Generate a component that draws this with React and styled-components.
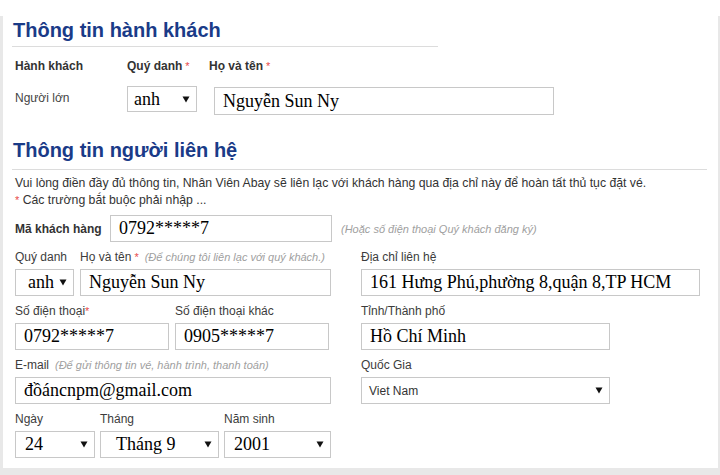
import React from 'react';
import styled, { createGlobalStyle } from 'styled-components';

const GlobalStyle = createGlobalStyle`
  html, body {
    margin: 0;
    padding: 0;
    background: #fff;
  }
  body {
    font-family: "Liberation Sans", Arial, sans-serif;
  }
  * {
    box-sizing: border-box;
  }
`;

const Page = styled.div`
  width: 720px;
  height: 475px;
  display: flex;
  flex-direction: column;
  padding: 0 2px 7px 3px;
  background: linear-gradient(#fff 0 16px, #e8e8e8 16px);
`;

const Panel = styled.div`
  flex: 1;
  background: #fff;
  padding: 18px 12px 0 10px;
`;

const SectionTitle = styled.h2`
  margin: ${p => p.$top}px 0 0 -1px;
  padding: 0 0 ${p => p.$pad}px 1px;
  width: ${p => p.$w}px;
  font: bold 20px/24px "Liberation Sans", Arial, sans-serif;
  color: #1a3b88;
  border-bottom: 1px solid #dcdcdc;
`;

const PassengerGrid = styled.div`
  display: grid;
  grid-template-columns: 112px 82px 1fr;
  row-gap: 12px;
  margin-top: 11px;
  padding-left: 2px;
  align-items: start;
`;

const HeadCell = styled.div`
  font-size: 12px;
  line-height: 16px;
  font-weight: bold;
  color: #333;
`;

const Cell = styled.div`
  font-size: 12px;
  line-height: 16px;
  color: #444;
  margin-top: ${p => p.$top || 0}px;
  margin-left: ${p => p.$left || 0}px;
`;

const Req = styled.span`
  color: #e84a4a;
  font-size: 11px;
  font-weight: normal;
  margin-left: ${p => (p.$tight ? 0 : 3)}px;
`;

const Hint = styled.span`
  font-size: 11px;
  font-style: italic;
  font-weight: normal;
  color: #a0a0a0;
  margin-left: ${p => p.$left || 6}px;
`;

const Intro = styled.p`
  margin: 5px 0 0;
  padding-left: 2px;
  font-size: 12.25px;
  line-height: 17px;
  color: #333;
`;

const CodeRow = styled.div`
  display: flex;
  align-items: center;
  margin-top: 6px;
  padding-left: 2px;
`;

const CodeLabel = styled.div`
  width: 95px;
  font-size: 12px;
  font-weight: bold;
  color: #333;
`;

const FormGrid = styled.div`
  display: grid;
  grid-template-columns: 316px 339px;
  column-gap: 30px;
  row-gap: 7px;
  margin-top: 7px;
  padding-left: 2px;
`;

const FieldLine = styled.div`
  display: flex;
  gap: ${p => p.$gap || 6}px;
`;

const Field = styled.div`
  display: flex;
  flex-direction: column;
  width: ${p => (p.$w ? `${p.$w}px` : 'auto')};
  flex: ${p => (p.$w ? 'none' : 1)};
`;

const Label = styled.div`
  font-size: 12px;
  line-height: 16px;
  color: #3c3c3c;
  margin-bottom: 4px;
  white-space: nowrap;
`;

const TextBox = styled.input`
  width: ${p => (p.$w ? `${p.$w}px` : '100%')};
  height: ${p => p.$h || 27}px;
  margin: 0;
  padding: 0 8px;
  border: 1px solid #c8c8c8;
  border-radius: 0;
  background: #fff;
  font: 18px "Liberation Serif", "Times New Roman", serif;
  color: #000;
  outline: none;
`;

const SelectBox = styled.div`
  width: ${p => (p.$w ? `${p.$w}px` : '100%')};
  height: ${p => p.$h || 27}px;
  display: flex;
  align-items: center;
  justify-content: space-between;
  padding: 0 6px 0 ${p => p.$indent || 8}px;
  border: 1px solid #c8c8c8;
  background: #fff;
  font: ${p => (p.$sans ? '12px "Liberation Sans", Arial, sans-serif' : '18px "Liberation Serif", "Times New Roman", serif')};
  color: ${p => (p.$sans ? '#333' : '#000')};
`;

const Arrow = () => (
  <svg width="8" height="7" viewBox="0 0 8 7">
    <polygon points="0.5,0.5 7.5,0.5 4,6.5" fill="#111" />
  </svg>
);

const Select = ({ value, ...rest }) => (
  <SelectBox {...rest}>
    <span>{value}</span>
    <Arrow />
  </SelectBox>
);

export default function App() {
  return (
    <Page>
      <GlobalStyle />
      <Panel>
        <SectionTitle $top={0} $pad={4} $w={426}>Thông tin hành khách</SectionTitle>

        <PassengerGrid>
          <HeadCell>Hành khách</HeadCell>
          <HeadCell>Quý danh<Req>*</Req></HeadCell>
          <HeadCell>Họ và tên<Req>*</Req></HeadCell>

          <Cell $top={4}>Người lớn</Cell>
          <Select value="anh" $w={70} $h={26} $indent={6} />
          <Cell $top={1} $left={5}>
            <TextBox readOnly value="Nguyễn Sun Ny" $w={340} $h={28} />
          </Cell>
        </PassengerGrid>

        <SectionTitle $top={23} $pad={7} $w={695}>Thông tin người liên hệ</SectionTitle>

        <Intro>
          Vui lòng điền đầy đủ thông tin, Nhân Viên Abay sẽ liên lạc với khách hàng qua địa chỉ này để hoàn tất thủ tục đặt vé.
          <br />
          <Req $tight>*</Req> Các trường bắt buộc phải nhập ...
        </Intro>

        <CodeRow>
          <CodeLabel>Mã khách hàng</CodeLabel>
          <TextBox readOnly value="0792*****7" $w={222} />
          <Hint $left={9}>(Hoặc số điện thoại Quý khách đăng ký)</Hint>
        </CodeRow>

        <FormGrid>
          <FieldLine>
            <Field $w={59}>
              <Label>Quý danh</Label>
              <Select value="anh" $indent={12} />
            </Field>
            <Field>
              <Label>Họ và tên<Req>*</Req><Hint>(Để chúng tôi liên lạc với quý khách.)</Hint></Label>
              <TextBox readOnly value="Nguyễn Sun Ny" />
            </Field>
          </FieldLine>
          <Field>
            <Label>Địa chỉ liên hệ</Label>
            <TextBox readOnly value="161 Hưng Phú,phường 8,quận 8,TP HCM" $w={339} />
          </Field>

          <FieldLine>
            <Field $w={154}>
              <Label>Số điện thoại<Req $tight>*</Req></Label>
              <TextBox readOnly value="0792*****7" />
            </Field>
            <Field $w={154}>
              <Label>Số điện thoại khác</Label>
              <TextBox readOnly value="0905*****7" />
            </Field>
          </FieldLine>
          <Field>
            <Label>Tỉnh/Thành phố</Label>
            <TextBox readOnly value="Hồ Chí Minh" $w={249} />
          </Field>

          <Field>
            <Label>E-mail<Hint>(Để gửi thông tin vé, hành trình, thanh toán)</Hint></Label>
            <TextBox readOnly value="đồáncnpm@gmail.com" />
          </Field>
          <Field>
            <Label>Quốc Gia</Label>
            <Select value="Viet Nam" $sans $w={249} $indent={7} />
          </Field>

          <FieldLine $gap={5}>
            <Field $w={80}>
              <Label>Ngày</Label>
              <Select value="24" $indent={9} />
            </Field>
            <Field $w={119}>
              <Label>Tháng</Label>
              <Select value="Tháng 9" $indent={15} />
            </Field>
            <Field $w={107}>
              <Label>Năm sinh</Label>
              <Select value="2001" $indent={9} />
            </Field>
          </FieldLine>
        </FormGrid>
      </Panel>
    </Page>
  );
}
